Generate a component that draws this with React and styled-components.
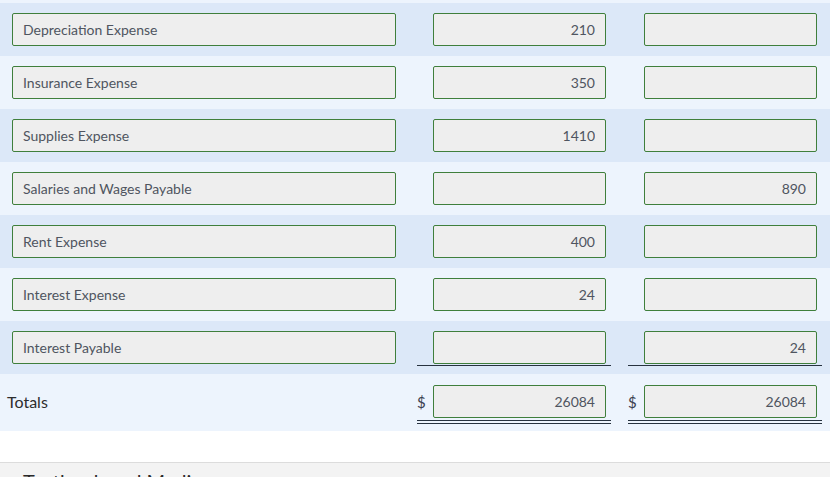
import styled, { createGlobalStyle } from "styled-components";

const GlobalStyle = createGlobalStyle`
  body {
    margin: 0;
    background: #fff;
    font-family: Lato, "Noto Sans", sans-serif;
    overflow: hidden;
  }
`;

const rows = [
  { label: "Depreciation Expense", debit: "210", credit: "" },
  { label: "Insurance Expense", debit: "350", credit: "" },
  { label: "Supplies Expense", debit: "1410", credit: "" },
  { label: "Salaries and Wages Payable", debit: "", credit: "890" },
  { label: "Rent Expense", debit: "400", credit: "" },
  { label: "Interest Expense", debit: "24", credit: "" },
  { label: "Interest Payable", debit: "", credit: "24", last: true },
];

function App() {
  return (
    <>
      <GlobalStyle />
      <Table>
        {rows.map((r, i) => (
          <Row key={r.label} $shade={i % 2 === 0}>
            <Field $wide readOnly value={r.label} />
            <Amount $first $rule={r.last ? "single" : "none"}>
              <Dollar />
              <Field readOnly value={r.debit} $right />
            </Amount>
            <Amount $rule={r.last ? "single" : "none"}>
              <Dollar />
              <Field readOnly value={r.credit} $right />
            </Amount>
          </Row>
        ))}
        <TotalRow>
          <TotalLabel>Totals</TotalLabel>
          <Amount $first $rule="double">
            <Dollar>$</Dollar>
            <Field readOnly value="26084" $right />
          </Amount>
          <Amount $rule="double">
            <Dollar>$</Dollar>
            <Field readOnly value="26084" $right />
          </Amount>
        </TotalRow>
      </Table>
      <Footer>
        <FooterTitle>Textbook and Media</FooterTitle>
      </Footer>
    </>
  );
}

const Table = styled.div`
  padding-top: 3px;
  background: #edf4fd;
`;

const Row = styled.div`
  display: flex;
  align-items: flex-start;
  height: 53px;
  box-sizing: border-box;
  padding: 10px 8px 0 12px;
  background: ${(p) => (p.$shade ? "#dce8f8" : "#edf4fd")};
`;

const TotalRow = styled(Row)`
  height: 57px;
  padding: 11px 8px 0 0;
  background: #edf4fd;
`;

const TotalLabel = styled.div`
  width: 396px;
  padding-left: 7px;
  box-sizing: border-box;
  font-size: 16px;
  line-height: 33px;
  color: #2d2d2d;
`;

const Amount = styled.div`
  display: flex;
  align-items: center;
  width: 194px;
  box-sizing: border-box;
  padding-right: 5px;
  padding-bottom: ${(p) => (p.$rule === "double" ? "2px" : "1px")};
  margin-left: ${(p) => (p.$first ? "21px" : "17px")};
  border-bottom: ${(p) =>
    p.$rule === "double"
      ? "4px double #27323f"
      : p.$rule === "single"
      ? "1px solid #27323f"
      : "1px solid transparent"};
`;

const Dollar = styled.span`
  width: 16px;
  flex: none;
  font-size: 15px;
  color: #3a4150;
`;

const Field = styled.input`
  width: ${(p) => (p.$wide ? "384px" : "173px")};
  height: 33px;
  box-sizing: border-box;
  flex: none;
  margin: 0;
  padding: 0 10px;
  border: 1px solid #3f7f3c;
  border-radius: 2px;
  background: #eeeeee;
  font-family: Lato, "Noto Sans", sans-serif;
  font-size: 14px;
  color: #4f5560;
  text-align: ${(p) => (p.$right ? "right" : "left")};
  outline: none;
`;

const Footer = styled.div`
  margin-top: 31px;
  border-top: 1px solid #dcdcdc;
  background: #f3f3f3;
  height: 60px;
  padding: 6px 0 0 23px;
`;

const FooterTitle = styled.div`
  font-size: 20px;
  color: #2a2a2a;
`;

export default App;
